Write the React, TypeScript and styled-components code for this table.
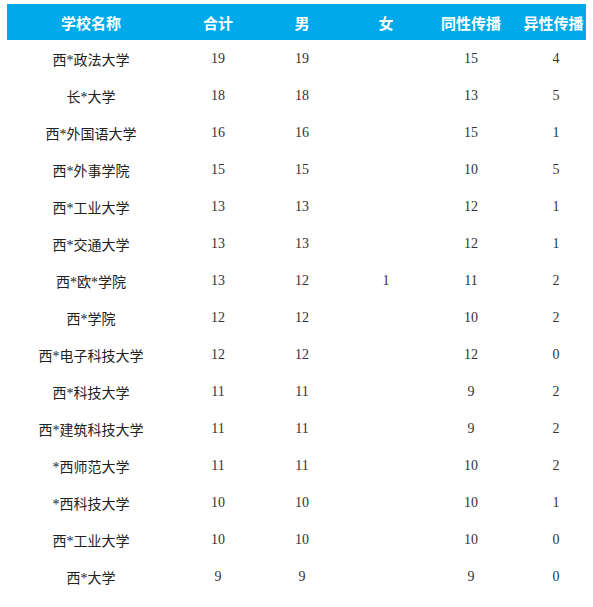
import React from "react";
import styled, { createGlobalStyle } from "styled-components";

const GlobalStyle = createGlobalStyle`
  html, body { margin: 0; padding: 0; background: #ffffff; overflow: hidden; }
`;

const Page = styled.div`
  padding: 4px 7px 0 7px;
`;

const Table = styled.div`
  width: 579px;
  display: flex;
  flex-direction: column;
`;

const COLS = "168px 86px 82px 86px 84px 73px";

const HeaderRow = styled.div`
  display: grid;
  grid-template-columns: ${COLS};
  height: 36px;
  align-items: center;
  background: #00aaea;
`;

const HeadCell = styled.div<{ $shift?: number }>`
  text-align: center;
  padding-left: ${(p) => (p.$shift ? `${p.$shift}px` : "0")};
  color: #ffffff;
  font-family: "Noto Sans CJK SC", "Noto Sans", sans-serif;
  font-weight: 700;
  font-size: 15px;
  white-space: nowrap;
`;

const Row = styled.div`
  display: grid;
  grid-template-columns: ${COLS};
  height: 37px;
  align-items: center;
`;

const Cell = styled.div<{ $shift?: number }>`
  text-align: center;
  padding-left: ${(p) => (p.$shift ? `${p.$shift}px` : "0")};
  color: #333333;
  font-family: "Liberation Serif", "Noto Sans CJK SC", serif;
  font-size: 14px;
  white-space: nowrap;
`;

const NameCell = styled(Cell)`
  color: #222222;
`;

type Rec = [string, number, number, number | null, number, number];

const data: Rec[] = [
  ["西*政法大学", 19, 19, null, 15, 4],
  ["长*大学", 18, 18, null, 13, 5],
  ["西*外国语大学", 16, 16, null, 15, 1],
  ["西*外事学院", 15, 15, null, 10, 5],
  ["西*工业大学", 13, 13, null, 12, 1],
  ["西*交通大学", 13, 13, null, 12, 1],
  ["西*欧*学院", 13, 12, 1, 11, 2],
  ["西*学院", 12, 12, null, 10, 2],
  ["西*电子科技大学", 12, 12, null, 12, 0],
  ["西*科技大学", 11, 11, null, 9, 2],
  ["西*建筑科技大学", 11, 11, null, 9, 2],
  ["*西师范大学", 11, 11, null, 10, 2],
  ["*西科技大学", 10, 10, null, 10, 1],
  ["西*工业大学", 10, 10, null, 10, 0],
  ["西*大学", 9, 9, null, 9, 0],
];

const headers = ["学校名称", "合计", "男", "女", "同性传播", "异性传播"];

export default function App() {
  return (
    <Page>
      <GlobalStyle />
      <Table>
        <HeaderRow>
          {headers.map((h, i) => (
            <HeadCell key={h} $shift={i === 5 ? 8 : 0}>
              {h}
            </HeadCell>
          ))}
        </HeaderRow>
        {data.map((r, idx) => (
          <Row key={idx}>
            <NameCell>{r[0]}</NameCell>
            <Cell>{r[1]}</Cell>
            <Cell>{r[2]}</Cell>
            <Cell>{r[3] ?? ""}</Cell>
            <Cell>{r[4]}</Cell>
            <Cell $shift={13}>{r[5]}</Cell>
          </Row>
        ))}
      </Table>
    </Page>
  );
}
